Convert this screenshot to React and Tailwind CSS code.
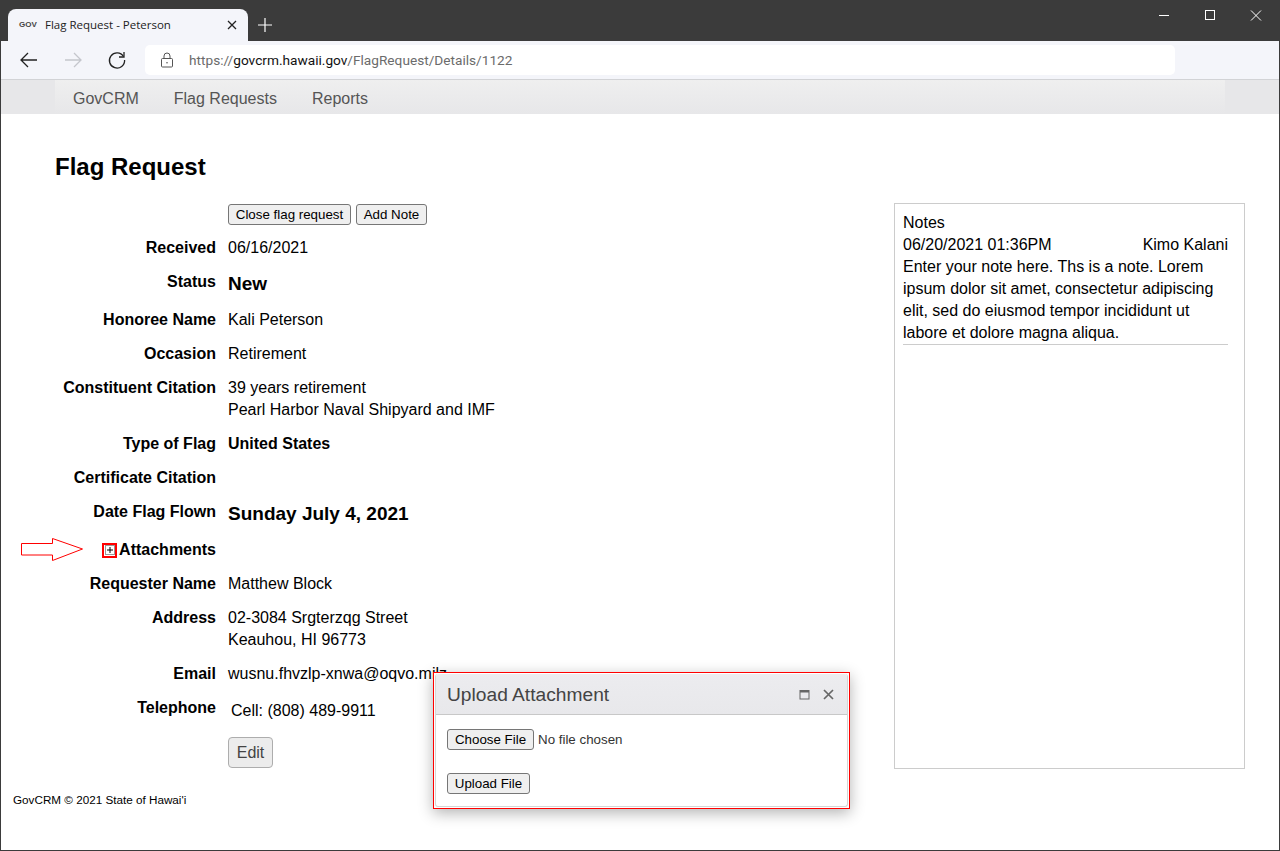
import React from 'react';

const Row = ({ label, children, className = '' }) => (
  <div className={`flex mb-3 ${className}`}>
    <div className="w-[215px] shrink-0 text-right font-bold">{label}</div>
    <div className="ml-3">{children}</div>
  </div>
);

const BrowserChrome = () => (
  <>
    <div className="h-[41px] bg-[#3b3b3b] flex items-end relative">
      <div className="ml-[8px] w-[240px] h-8 bg-[#f4f5fa] rounded-t-lg flex items-center pl-[11px] pr-[11px] font-['Open_Sans',sans-serif] text-[11.5px] text-[#222]">
        <span className="w-[16px] font-bold text-[8px] text-[#444] font-['Liberation_Sans',sans-serif]">GOV</span>
        <span className="ml-[10px] flex-1">Flag Request - Peterson</span>
        <svg width="10" height="10" viewBox="0 0 10 10" stroke="#222" strokeWidth="1.3" fill="none">
          <path d="M1 1l8 8M9 1l-8 8" />
        </svg>
      </div>
      <svg className="ml-[10px] mb-[9px]" width="14" height="14" viewBox="0 0 14 14" stroke="#fff" strokeWidth="1.2" fill="none">
        <path d="M7 0v14M0 7h14" />
      </svg>
      <div className="ml-auto mr-px mt-px self-start flex items-center h-[30px] text-white">
        <svg width="46" height="30" viewBox="0 0 46 30" stroke="#fff" fill="none"><path d="M18 14.5h10" /></svg>
        <svg width="46" height="30" viewBox="0 0 46 30" stroke="#fff" fill="none"><rect x="18.5" y="9.5" width="9" height="9" /></svg>
        <svg width="46" height="30" viewBox="0 0 46 30" stroke="#fff" fill="none"><path d="M18 9.5l10 10M28 9.5l-10 10" /></svg>
      </div>
    </div>
    <div className="h-[38px] bg-[#f4f5fa] flex items-center">
      <svg className="ml-[19px]" width="20" height="20" viewBox="0 0 20 20" stroke="#222" strokeWidth="1.3" fill="none">
        <path d="M2 10h16M9 3l-7 7 7 7" />
      </svg>
      <svg className="ml-[24px]" width="20" height="20" viewBox="0 0 20 20" stroke="#c4c6cc" strokeWidth="1.3" fill="none">
        <path d="M2 10h16M11 3l7 7-7 7" />
      </svg>
      <svg className="ml-[24px]" width="20" height="20" viewBox="0 0 20 20" stroke="#222" strokeWidth="1.3" fill="none">
        <path d="M16.5 6.5A7.6 7.6 0 1 0 17.6 10" />
        <path d="M17 2v5h-5" />
      </svg>
      <div className="ml-[18px] w-[1030px] h-[30px] bg-white rounded-[5px] flex items-center pl-[15px] font-['Roboto',sans-serif] text-[13.67px] text-[#6b6b6b]">
        <svg width="14" height="16" viewBox="0 0 14 16" stroke="#555" strokeWidth="1" fill="none">
          <rect x="1.5" y="6.5" width="11" height="8.5" rx="1" />
          <path d="M4 6.5V4a3 3 0 0 1 6 0v2.5" />
          <circle cx="7" cy="10.8" r="0.8" fill="#555" stroke="none" />
        </svg>
        <span className="ml-[15px]">https://<span className="text-[#111]">govcrm.hawaii.gov</span>/FlagRequest/Details/1122</span>
      </div>
    </div>
    <div className="h-px bg-[#d2d3d6]" />
  </>
);

const Nav = () => (
  <div className="h-[34px] bg-[#e7e7e9] pl-[54px] pr-[54px]">
    <div className="h-full pt-[3px] bg-gradient-to-b from-[#efefef] to-[#e7e7e9] flex items-center text-[16px] text-[#555] pl-[18px] gap-[35px]">
      <span>GovCRM</span>
      <span>Flag Requests</span>
      <span>Reports</span>
    </div>
  </div>
);

const ClassicButton = ({ children, className = '' }) => (
  <button className={`bg-[#efefef] border border-[#767676] rounded-[3px] text-black ${className}`}>{children}</button>
);

const Details = () => (
  <div className="w-[893px] shrink-0">
    <div className="flex mb-[12px] ml-[227px] gap-[5px]">
      <ClassicButton className="h-[21px] w-[123px] text-[13.33px] leading-[19px]">Close flag request</ClassicButton>
      <ClassicButton className="h-[21px] w-[71px] text-[13.33px] leading-[19px]">Add Note</ClassicButton>
    </div>
    <Row label="Received">06/16/2021</Row>
    <Row label="Status" className="h-[26px]"><span className="font-bold text-[19px] leading-[25px]">New</span></Row>
    <Row label="Honoree Name">Kali Peterson</Row>
    <Row label="Occasion">Retirement</Row>
    <Row label="Constituent Citation">39 years retirement<br />Pearl Harbor Naval Shipyard and IMF</Row>
    <Row label="Type of Flag"><span className="font-bold">United States</span></Row>
    <Row label="Certificate Citation"><span>&nbsp;</span></Row>
    <Row label="Date Flag Flown" className="h-[24px]"><span className="font-bold text-[19px] leading-[25px]">Sunday July 4, 2021</span></Row>
    <Row
      label={
        <span className="inline-flex items-center">
          <span className="w-[15px] h-[15px] mr-[2px] border-2 border-[#ff0000] flex items-center justify-center bg-white">
            <span className="w-[10px] h-[10px] border border-[#999] flex items-center justify-center">
              <svg width="6" height="6" viewBox="0 0 6 6" stroke="#000" fill="none"><path d="M3 0v6M0 3h6" /></svg>
            </span>
          </span>
          Attachments
        </span>
      }
    >
      <span>&nbsp;</span>
    </Row>
    <Row label="Requester Name">Matthew Block</Row>
    <Row label="Address">02-3084 Srgterzqg Street<br />Keauhou, HI 96773</Row>
    <Row label="Email">wusnu.fhvzlp-xnwa@oqvo.milz</Row>
    <Row label="Telephone" className="h-[28px]"><span className="block pt-[3px] pl-[3px]">Cell: (808) 489-9911</span></Row>
    <button className="ml-[227px] block w-[45px] h-[31px] bg-[#ececec] border border-[#adadad] rounded-[4px] text-[#444]">Edit</button>
  </div>
);

const Notes = () => (
  <div className="w-[351px] h-[566px] border border-[#cccccc] pl-2 pr-4 pt-[8px]">
    <div>Notes</div>
    <div className="flex">
      <span>06/20/2021 01:36PM</span>
      <span className="ml-auto">Kimo Kalani</span>
    </div>
    <div className="border-b border-[#cccccc]">
      Enter your note here. Ths is a note. Lorem ipsum dolor sit amet, consectetur adipiscing elit, sed do eiusmod tempor incididunt ut labore et dolore magna aliqua.
    </div>
  </div>
);

const UploadModal = () => (
  <div className="absolute left-[432px] top-[672px] w-[417px] h-[137px] border border-[#ff0000] p-px bg-white shadow-[0_4px_14px_rgba(0,0,0,0.3)]">
    <div className="h-full rounded-[3px] border border-[#d5d5d5] border-t-0 bg-white text-[#333]">
      <div className="h-[41px] pt-px bg-gradient-to-b from-[#ececef] to-[#e8e8eb] border-b border-[#c8c8c8] flex items-center pl-[11px] pr-[13px] rounded-t-[3px]">
        <span className="text-[19.2px] text-[#444] flex-1">Upload Attachment</span>
        <svg width="11" height="11" viewBox="0 0 11 11" fill="none" stroke="#666">
          <rect x="1" y="1.5" width="9" height="8.5" />
          <path d="M1 2.5h9" strokeWidth="2" />
        </svg>
        <svg className="ml-[13px]" width="11" height="11" viewBox="0 0 11 11" fill="none" stroke="#666" strokeWidth="1.7">
          <path d="M1 1l9 9M10 1l-9 9" />
        </svg>
      </div>
      <div className="pl-[11px] pt-[14px] text-[13.33px] leading-[15px]">
        <div className="flex items-center">
          <ClassicButton className="h-[21px] w-[87px]">Choose File</ClassicButton>
          <span className="ml-[4px]">No file chosen</span>
        </div>
        <ClassicButton className="h-[21px] w-[83px] mt-[23px] block">Upload File</ClassicButton>
      </div>
    </div>
  </div>
);

const App = () => (
  <div className="relative w-[1280px] h-[851px] bg-white border border-[#3b3b3b] border-t-0 overflow-hidden font-['Liberation_Sans',Arial,sans-serif] text-[16px] leading-[22px] text-black">
    <div className="-mx-px">
      <BrowserChrome />
    </div>
    <Nav />
    <div className="pl-[54px] pt-[39px]">
      <h1 className="text-[24px] leading-[28px] font-bold">Flag Request</h1>
    </div>
    <div className="flex mt-[23px] relative">
      <Details />
      <div className="-mt-[1px]"><Notes /></div>
    </div>
    <div className="pl-3 mt-[22px] text-[11.7px] leading-[17px]">GovCRM © 2021 State of Hawai'i</div>

    <svg className="absolute left-[20px] top-[537px]" width="64" height="25" viewBox="0 0 64 25" fill="#fff" stroke="#ff0000">
      <path d="M0.5 6.5H31.5V1.5L61.5 12L31.5 23.5V18H0.5Z" />
    </svg>
    <UploadModal />
  </div>
);

export default App;
